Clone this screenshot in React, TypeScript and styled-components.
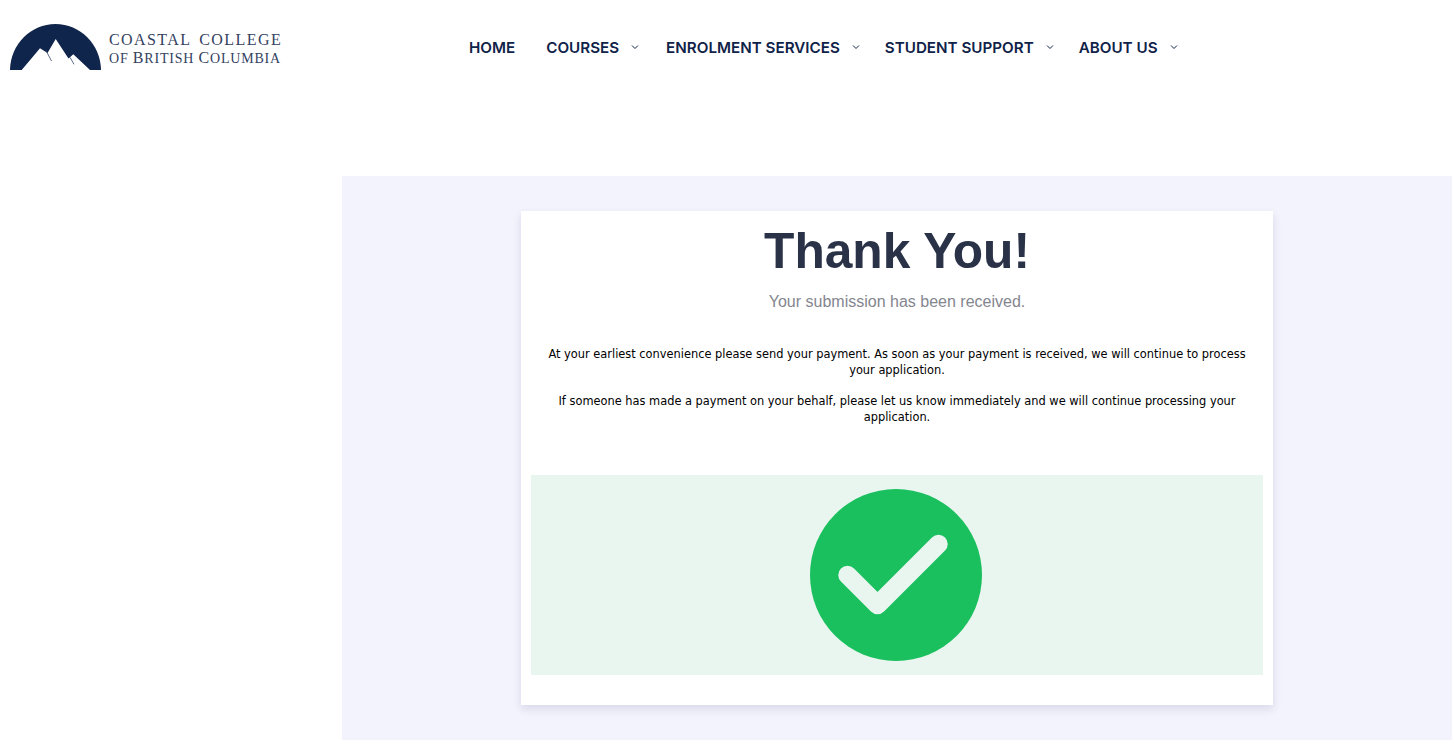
import React from "react";
import styled, { createGlobalStyle } from "styled-components";

const navItems = [
  { label: "HOME", hasMenu: false, gap: 31 },
  { label: "COURSES", hasMenu: true, gap: 27 },
  { label: "ENROLMENT SERVICES", hasMenu: true, gap: 25 },
  { label: "STUDENT SUPPORT", hasMenu: true, gap: 25 },
  { label: "ABOUT US", hasMenu: true, gap: 0 },
];

function LogoMark() {
  return (
    <svg width="92" height="46" viewBox="0 0 92 46">
      <path fill="#10254b" d="M0 46C0.500 20 21 0 45.500 0s45 20 45.500 46z" />
      <path fill="#ffffff" d="M11.700 46L30 24.300l7.500 4.700L45.700 15l12.800 19.500 4.800-4.200L80 46z" />
      <path d="M36 26.500L41.500 37M60 33.300l4 7" fill="none" stroke="#33466b" strokeWidth="0.800" />
    </svg>
  );
}

function CheckBadge() {
  return (
    <svg width="172" height="172" viewBox="0 0 172 172">
      <circle cx="86" cy="86" r="86" fill="#1abf5e" />
      <path
        d="M37.500 86l30 30 61-61"
        fill="none"
        stroke="#e9f6ef"
        strokeWidth="18.500"
        strokeLinecap="round"
        strokeLinejoin="round"
      />
    </svg>
  );
}

function Chevron() {
  return (
    <svg width="8" height="6" viewBox="0 0 8 6">
      <path d="M1 1.500l3 3 3-3" fill="none" stroke="#10254b" strokeWidth="1" />
    </svg>
  );
}

export default function App() {
  return (
    <>
      <GlobalStyle />
      <Header>
        <Logo>
          <LogoMark />
          <LogoText>
            <LogoTop>COASTAL COLLEGE</LogoTop>
            <LogoBottom>
              <small>OF </small>B<small>RITISH </small>C<small>OLUMBIA</small>
            </LogoBottom>
          </LogoText>
        </Logo>
        <Nav>
          {navItems.map((item) => (
            <NavItem key={item.label} $gap={item.gap}>
              {item.label}
              {item.hasMenu && (
                <ChevronWrap>
                  <Chevron />
                </ChevronWrap>
              )}
            </NavItem>
          ))}
        </Nav>
      </Header>
      <Panel>
        <Card>
          <Title>Thank You!</Title>
          <Subtitle>Your submission has been received.</Subtitle>
          <Message>
            At your earliest convenience please send your payment. As soon as
            your payment is received, we will continue to process your
            application.
          </Message>
          <Message>
            If someone has made a payment on your behalf, please let us know
            immediately and we will continue processing your application.
          </Message>
          <SuccessBox>
            <CheckBadge />
          </SuccessBox>
        </Card>
      </Panel>
    </>
  );
}

const GlobalStyle = createGlobalStyle`
  html, body {
    margin: 0;
    background: #ffffff;
  }
`;

const Header = styled.header`
  display: flex;
  align-items: flex-start;
  height: 176px;
  padding: 24px 0 0 10px;
  box-sizing: border-box;
`;

const Logo = styled.div`
  display: flex;
  align-items: flex-start;
  gap: 7px;
  width: 459px;
  flex-shrink: 0;
`;

const LogoText = styled.div`
  display: flex;
  flex-direction: column;
  padding-top: 7px;
  color: #33425f;
  font-family: "Liberation Serif", serif;
  white-space: nowrap;
`;

const LogoTop = styled.span`
  font-size: 16px;
  line-height: 18px;
  letter-spacing: 1.420px;
  word-spacing: 3px;
`;

const LogoBottom = styled.span`
  font-size: 16px;
  line-height: 18px;
  letter-spacing: 0.800px;

  small {
    font-size: 14px;
  }
`;

const Nav = styled.nav`
  display: flex;
  align-items: center;
  height: 46px;
`;

const NavItem = styled.div<{ $gap: number }>`
  display: flex;
  align-items: center;
  margin-right: ${(p) => p.$gap}px;
  color: #0f2248;
  font-family: Inter, "Liberation Sans", sans-serif;
  font-size: 15.200px;
  font-weight: 600;
  white-space: nowrap;
`;

const ChevronWrap = styled.span`
  display: flex;
  margin-left: 12px;
`;

const Panel = styled.main`
  display: flex;
  justify-content: center;
  box-sizing: border-box;
  width: 1110px;
  height: 564px;
  margin-left: 342px;
  padding-top: 35px;
  background: #f3f3fd;
`;

const Card = styled.section`
  box-sizing: border-box;
  width: 752px;
  height: 494px;
  padding: 10px;
  background: #ffffff;
  box-shadow: 0 4px 8px rgba(60, 60, 110, 0.14);
  text-align: center;
`;

const Title = styled.h1`
  margin: 0;
  color: #2a3248;
  font-family: "Liberation Sans", sans-serif;
  font-size: 49.700px;
  font-weight: 700;
  line-height: 61px;
`;

const Subtitle = styled.p`
  margin: 11px 0 35px;
  color: #84868f;
  font-family: "Liberation Sans", sans-serif;
  font-size: 16px;
  line-height: 18px;
`;

const Message = styled.p`
  margin: 0 0 15px;
  padding: 0 10px;
  color: #000000;
  font-family: "DejaVu Sans", sans-serif;
  font-size: 11.400px;
  line-height: 16px;
`;

const SuccessBox = styled.div`
  display: flex;
  align-items: center;
  justify-content: center;
  height: 200px;
  margin-top: 50px;
  padding-right: 2px;
  background: #e9f6ef;
`;
